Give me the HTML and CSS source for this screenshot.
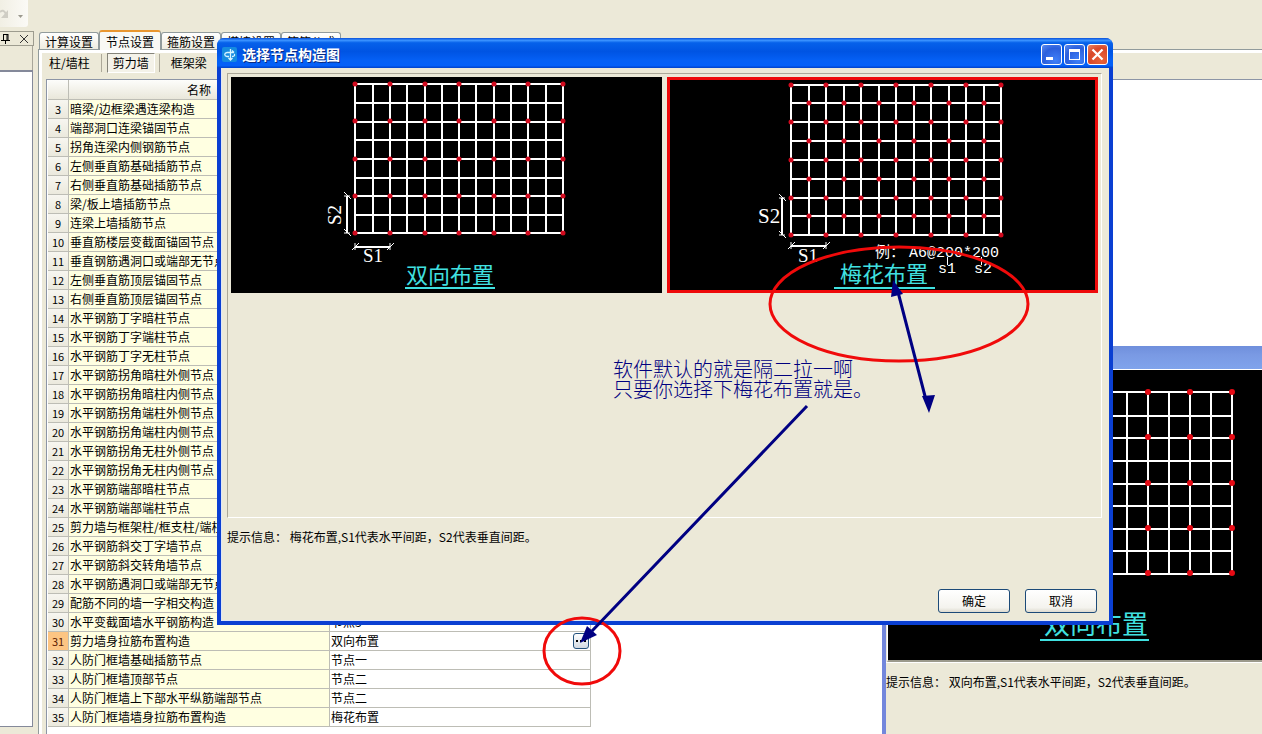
FILE: index.html
```html
<!DOCTYPE html>
<html lang="zh-CN">
<head>
<meta charset="utf-8">
<title>节点设置</title>
<link rel="stylesheet" href="styles.css">
</head>
<body>
<div class="app">
  <header class="toolbar">
    <button class="redo" aria-label="重做">
      <svg width="28" height="27" viewBox="0 0 28 27"><path d="M0 12c2-2 4-2 6 2" fill="none" stroke="#cfcdc4" stroke-width="2"/><path d="M8 10v8H1z" fill="#cfcdc4"/><path d="M18 15h5l-2.500 3z" fill="#9b998e"/></svg>
    </button>
  </header>
  <div class="workspace">
    <aside class="dock">
      <div class="dock-head">
        <button class="dock-btn" aria-label="固定"><svg width="10" height="10" viewBox="0 0 10 10"><path d="M2 .5h5M2.500 0v6M6 0v6M7 0v6M0 6.500h9M4.500 6v4" stroke="#000" fill="none"/></svg></button>
        <button class="dock-btn" aria-label="关闭"><svg width="8" height="8" viewBox="0 0 8 8"><path d="M0 0l8 8M8 0l-8 8" stroke="#333" fill="none"/></svg></button>
      </div>
      <div class="dock-bar"></div>
      <div class="dock-body"></div>
    </aside>
    <main class="content">
      <nav class="tabs">
        <button class="tab">计算设置</button>
        <button class="tab active">节点设置</button>
        <button class="tab">箍筋设置</button>
        <button class="tab">搭接设置</button>
        <button class="tab">箍筋公式</button>
      </nav>
      <section class="panel">
        <div class="subtabs">
          <button class="sub">柱/墙柱</button>
          <button class="sub pressed">剪力墙</button>
          <button class="sub">框架梁</button>
        </div>
        <div class="sheet">
          <table class="grid">
            <colgroup><col class="c-num"><col class="c-name"><col class="c-val"></colgroup>
            <thead><tr><th></th><th>名称</th><th>节点图</th></tr></thead>
            <tbody>
              <tr><th>3</th><td>暗梁/边框梁遇连梁构造</td><td></td></tr>
              <tr><th>4</th><td>端部洞口连梁锚固节点</td><td></td></tr>
              <tr><th>5</th><td>拐角连梁内侧钢筋节点</td><td></td></tr>
              <tr><th>6</th><td>左侧垂直筋基础插筋节点</td><td></td></tr>
              <tr><th>7</th><td>右侧垂直筋基础插筋节点</td><td></td></tr>
              <tr><th>8</th><td>梁/板上墙插筋节点</td><td></td></tr>
              <tr><th>9</th><td>连梁上墙插筋节点</td><td></td></tr>
              <tr><th>10</th><td>垂直筋楼层变截面锚固节点</td><td></td></tr>
              <tr><th>11</th><td>垂直钢筋遇洞口或端部无节点</td><td></td></tr>
              <tr><th>12</th><td>左侧垂直筋顶层锚固节点</td><td></td></tr>
              <tr><th>13</th><td>右侧垂直筋顶层锚固节点</td><td></td></tr>
              <tr><th>14</th><td>水平钢筋丁字暗柱节点</td><td></td></tr>
              <tr><th>15</th><td>水平钢筋丁字端柱节点</td><td></td></tr>
              <tr><th>16</th><td>水平钢筋丁字无柱节点</td><td></td></tr>
              <tr><th>17</th><td>水平钢筋拐角暗柱外侧节点</td><td></td></tr>
              <tr><th>18</th><td>水平钢筋拐角暗柱内侧节点</td><td></td></tr>
              <tr><th>19</th><td>水平钢筋拐角端柱外侧节点</td><td></td></tr>
              <tr><th>20</th><td>水平钢筋拐角端柱内侧节点</td><td></td></tr>
              <tr><th>21</th><td>水平钢筋拐角无柱外侧节点</td><td></td></tr>
              <tr><th>22</th><td>水平钢筋拐角无柱内侧节点</td><td></td></tr>
              <tr><th>23</th><td>水平钢筋端部暗柱节点</td><td></td></tr>
              <tr><th>24</th><td>水平钢筋端部端柱节点</td><td></td></tr>
              <tr><th>25</th><td>剪力墙与框架柱/框支柱/端柱</td><td></td></tr>
              <tr><th>26</th><td>水平钢筋斜交丁字墙节点</td><td></td></tr>
              <tr><th>27</th><td>水平钢筋斜交转角墙节点</td><td></td></tr>
              <tr><th>28</th><td>水平钢筋遇洞口或端部无节点</td><td></td></tr>
              <tr><th>29</th><td>配筋不同的墙一字相交构造</td><td></td></tr>
              <tr><th>30</th><td>水平变截面墙水平钢筋构造</td><td>节点3</td></tr>
              <tr class="current"><th>31</th><td>剪力墙身拉筋布置构造</td><td><div class="picker"><span>双向布置</span><button class="more" aria-label="选择"><svg width="10" height="3" viewBox="0 0 10 3"><path d="M0 0h2v2H0zM4 0h2v2H4zM8 0h2v2H8z"/></svg></button></div></td></tr>
              <tr><th>32</th><td>人防门框墙基础插筋节点</td><td>节点一</td></tr>
              <tr><th>33</th><td>人防门框墙顶部节点</td><td>节点二</td></tr>
              <tr><th>34</th><td>人防门框墙上下部水平纵筋端部节点</td><td>节点二</td></tr>
              <tr><th>35</th><td>人防门框墙墙身拉筋布置构造</td><td>梅花布置</td></tr>
            </tbody>
          </table>
        </div>
      </section>
    </main>
  </div>

  <section class="preview">
    <div class="preview-title"></div>
    <div class="preview-pic">
      <svg width="374" height="290" viewBox="0 0 374 290">
        <g stroke="#fff" stroke-width="2" fill="none">
          <path d="M92 22H345M92 46H345M92 68H345M92 91H345M92 114H345M92 136H345M92 159H345M92 181H345M92 204H345"/>
          <path d="M92 22V204M113 22V204M134 22V204M155 22V204M176 22V204M197 22V204M218 22V204M239 22V204M260 22V204M281 22V204M302 22V204M323 22V204M344 22V204"/>
        </g>
        <g stroke="#e60a14" stroke-width="6" stroke-linecap="round">
          <path id="pr" d="M92 22h0M134 22h0M176 22h0M218 22h0M260 22h0M302 22h0M344 22h0"/>
          <use href="#pr" y="45"/><use href="#pr" y="91"/><use href="#pr" y="136"/><use href="#pr" y="181"/>
        </g>
        <text class="cap big" x="156" y="264">双向布置</text>
        <path d="M152 270H261" stroke="#40e0e0" stroke-width="2"/>
      </svg>
    </div>
    <p class="hint">提示信息： 双向布置,S1代表水平间距，S2代表垂直间距。</p>
  </section>

  <section class="dialog" role="dialog" aria-labelledby="dlg-title">
    <div class="titlebar">
      <svg class="logo" width="15" height="15" viewBox="0 0 15 15"><rect width="15" height="15" rx="2" fill="#168be0"/><path d="M5 5.500H12M10 3.500l2 2M8.500 2v11M6.500 11l2 2 2-2M5 5.500C2 6 2 9 5 9.500h2M10 9.500c3 0 3-2 2-2.500" fill="none" stroke="#d9f4ff" stroke-width="1.300"/></svg>
      <h1 id="dlg-title">选择节点构造图</h1>
      <div class="winbtns">
        <button class="wb" aria-label="最小化"><svg width="19" height="19" viewBox="0 0 19 19"><path d="M4 12h7v3H4z" fill="#fff"/></svg></button>
        <button class="wb" aria-label="最大化"><svg width="19" height="19" viewBox="0 0 19 19"><path d="M4 4h11v11H4zM5 7v7h9V7z" fill="#fff" fill-rule="evenodd"/></svg></button>
        <button class="wb close" aria-label="关闭"><svg width="19" height="19" viewBox="0 0 19 19"><path d="M4.500 4.500l10 10M14.500 4.500l-10 10" stroke="#fff" stroke-width="2.200"/></svg></button>
      </div>
    </div>
    <div class="dialog-body">
      <div class="choices">
        <button class="choice" aria-label="双向布置">
          <svg viewBox="0 0 431 216">
            <g stroke="#fff" stroke-width="2" fill="none">
              <path d="M124 7H333M124 26H333M124 45H333M124 63H333M124 82H333M124 101H333M124 119H333M124 138H333M124 156H333"/>
              <path d="M124 7V156M142 7V156M159 7V156M176 7V156M194 7V156M211 7V156M228 7V156M245 7V156M263 7V156M280 7V156M297 7V156M315 7V156M332 7V156"/>
              <path d="M116 119V156M124 170H159"/>
              <path d="M113 115l7 7M113 152l7 7M113 119h6M113 156h6M121 173l7-7M156 173l7-7M124 166v7M159 166v7" stroke-width="1"/>
            </g>
            <g stroke="#d20a1e" stroke-width="5" stroke-linecap="round">
              <path id="ar" d="M124 7h0M159 7h0M194 7h0M228 7h0M263 7h0M297 7h0M332 7h0"/>
              <use href="#ar" y="37"/><use href="#ar" y="75"/><use href="#ar" y="112"/><use href="#ar" y="149"/>
            </g>
            <text class="dim" x="132" y="185">S1</text>
            <text class="dim" transform="translate(110 148) rotate(-90)">S2</text>
            <text class="cap" x="175" y="206">双向布置</text>
            <path d="M174 211H264" stroke="#40e0e0" stroke-width="2"/>
          </svg>
        </button>
        <button class="choice selected" aria-label="梅花布置">
          <svg viewBox="0 0 431 216">
            <g stroke="#fff" stroke-width="2" fill="none">
              <path d="M124 8H335M124 26H335M124 45H335M124 64H335M124 83H335M124 102H335M124 121H335M124 139H335M124 158H335"/>
              <path d="M124 8V158M142 8V158M159 8V158M177 8V158M194 8V158M212 8V158M229 8V158M247 8V158M264 8V158M282 8V158M299 8V158M317 8V158M334 8V158"/>
              <path d="M115 121V158M124 169H159"/>
              <path d="M112 117l7 7M112 154l7 7M112 121h6M112 158h6M121 172l7-7M156 172l7-7M124 165v7M159 165v7M280.500 180v8M314.500 180v8" stroke-width="1"/>
            </g>
            <g stroke="#d20a1e" stroke-width="5" stroke-linecap="round">
              <path id="br" d="M124 8h0M159 8h0M194 8h0M229 8h0M264 8h0M299 8h0M334 8h0"/>
              <use href="#br" y="37"/><use href="#br" y="75"/><use href="#br" y="113"/><use href="#br" y="150"/>
              <path id="bs" d="M142 26h0M177 26h0M212 26h0M247 26h0M282 26h0M317 26h0"/>
              <use href="#bs" y="38"/><use href="#bs" y="76"/><use href="#bs" y="113"/>
            </g>
            <text class="dim" x="131" y="185">S1</text>
            <text class="dim large" x="91" y="146">S2</text>
            <text class="ex" x="208" y="180">例：</text>
            <text class="ex" x="242" y="180">A6@200*200</text>
            <text class="ex" x="271" y="196">s1</text>
            <text class="ex" x="307" y="196">s2</text>
            <text class="cap" x="173" y="205">梅花布置</text>
            <path d="M167 211H268" stroke="#40e0e0" stroke-width="2"/>
          </svg>
        </button>
      </div>
      <p class="hint">提示信息： 梅花布置,S1代表水平间距，S2代表垂直间距。</p>
      <div class="actions">
        <button class="btn">确定</button>
        <button class="btn">取消</button>
      </div>
    </div>
  </section>

  <svg class="marks" width="1262" height="734" viewBox="0 0 1262 734">
    <g fill="none" stroke="#f00a0a" stroke-width="3">
      <ellipse cx="899" cy="304" rx="129" ry="57"/>
      <ellipse cx="582" cy="651" rx="38" ry="33"/>
    </g>
    <g stroke="#000082" stroke-width="3" fill="none"><path d="M898 292L926 400M807 406L592 631"/></g>
    <g fill="#000082"><path d="M893 280l-2 17 12-3zM929 413l-7-17 13-1zM580 643l7-17 10 9z"/></g>
    <g class="note"><text x="613" y="377">软件默认的就是隔二拉一啊</text><text x="613" y="397">只要你选择下梅花布置就是。</text></g>
  </svg>
</div>
</body>
</html>
```
FILE: styles.css
```css
* { box-sizing: border-box; }
body {
  margin: 0;
  background: #ece9d8;
  color: #000;
  font: 12px/16px "Noto Sans CJK SC", sans-serif;
}
button { font: inherit; color: inherit; padding: 0; margin: 0; border: 0; background: none; }
svg { display: block; }
h1, p { margin: 0; }

.app {
  position: relative;
  height: 100vh;
  overflow: hidden;
  display: flex;
  flex-direction: column;
}
.toolbar { height: 30px; flex: none; }
.redo { display: block; background: linear-gradient(90deg, #f1efe4, #fbfaf6); border-radius: 0 0 3px 0; }

.workspace { flex: 1; display: flex; min-height: 0; }
.dock { width: 34px; flex: none; display: flex; flex-direction: column; padding: 1px 0 7px; }
.dock-head {
  height: 15px;
  display: flex;
  align-items: center;
  justify-content: flex-end;
  gap: 9px;
  padding-right: 5px;
  border: 1px solid #9d9c8f;
  border-left: 0;
}
.dock-bar { height: 24px; margin-right: 1px; border-right: 1px solid #a8a69a; }
.dock-body { flex: 1; margin-right: 1px; background: #fff; border: solid #84899a; border-width: 2px 1px 1px 0; }

.content { flex: 1; min-width: 0; display: flex; flex-direction: column; padding-left: 4px; }
.tabs { display: flex; align-items: flex-end; height: 19px; padding-left: 1px; flex: none; }
.tab {
  width: 60px;
  height: 17px;
  flex: none;
  background: linear-gradient(#fff, #eeece0);
  border: 1px solid #919b9c;
  border-bottom: 0;
  border-radius: 3px 3px 0 0;
  white-space: nowrap;
  line-height: 17px;
}
.tab.active { width: 62px; height: 20px; margin-bottom: -1px; background: #f8f8f4; border-top: 2px solid #e9962f; z-index: 1; }

.panel {
  flex: 1;
  min-height: 0;
  display: flex;
  flex-direction: column;
  border: solid #919b9c;
  border-width: 1px 0 0 1px;
  box-shadow: inset 3px 3px #fff;
  padding-left: 7px;
}
.subtabs { display: flex; align-items: center; height: 29px; flex: none; padding: 0 0 3px 3px; }
.sub { height: 20px; line-height: 18px; margin-right: 17px; }
.sub.pressed {
  padding: 0 5px;
  margin-right: 16px;
  border: 1px solid;
  border-color: #85847a #fff #fff #85847a;
  background: #f4f2e9;
  position: relative;
}
.sub.pressed::before, .sub.pressed::after { content: ""; position: absolute; top: 0; bottom: 0; width: 1px; background: #aca899; }
.sub.pressed::before { left: -7px; }
.sub.pressed::after { right: -6px; }

.sheet { flex: 1; min-height: 0; overflow: hidden; background: #fff; border: solid #8c95a6; border-width: 1px 0 0 1px; padding-left: 1px; }
.grid { table-layout: fixed; width: 543px; border-spacing: 0; }
.c-num { width: 21px; }
.c-name, .c-val { width: 261px; }
.grid th, .grid td {
  height: 19px;
  padding: 0 0 0 1px;
  border: solid #bdbdb5;
  border-width: 0 1px 1px 0;
  line-height: 18px;
  white-space: nowrap;
  overflow: hidden;
  text-align: left;
}
.grid th { font-weight: 400; text-align: center; padding: 0; background: linear-gradient(#f7f6f0, #ebe9dd); }
.grid tbody th { font-size: 11px; }
.grid thead th { height: 20px; background: linear-gradient(#fdfdfb, #e9e7da); }
.grid td:nth-child(2) { background: #ffffe1; }
.grid .current th { background: #fdc583; color: #5b1a00; }
.picker { display: flex; justify-content: space-between; align-items: center; height: 18px; padding-right: 1px; }
.more {
  width: 16px;
  height: 16px;
  display: flex;
  align-items: center;
  justify-content: center;
  border: 1px solid #24527d;
  border-radius: 3px;
  background: linear-gradient(#fff, #d3dae2);
}

.preview {
  position: absolute;
  left: 882px;
  right: 0;
  top: 346px;
  bottom: 0;
  background: #ece9d8;
  border-left: 4px solid #7387dc;
}
.preview-title { height: 23px; margin-left: -4px; background: linear-gradient(#6f8fdc, #7a9ae4 40%, #7fa3ec); }
.preview-pic { height: 293px; margin-left: 1px; overflow: hidden; background: #000; border: solid #fff; border-width: 1px 0 0 1px; border-bottom: 2px solid #9c9a8c; }
.preview .hint { padding: 11px 0 0; border-top: 1px solid #fff; }
.hint { white-space: nowrap; }

.cap { font: 22px "Noto Sans CJK SC", sans-serif; fill: #40e0e0; }
.cap.big { font-size: 26px; }
.dim { font: 19px "Liberation Serif", serif; fill: #fff; }
.dim.large { font-size: 21px; }
.ex { font: 15px "Liberation Mono", "Noto Sans CJK SC", monospace; fill: #fff; }

.dialog {
  position: absolute;
  left: 217px;
  right: 149px;
  top: 38px;
  bottom: 109px;
  display: flex;
  flex-direction: column;
  background: #ece9d8;
  border: solid #0a3fd2;
  border-width: 0 4px 4px;
  border-radius: 8px 8px 0 0;
  box-shadow: inset 0 -1px #dfe6f5, inset 1px 0 #dfe6f5;
}
.titlebar {
  height: 30px;
  flex: none;
  display: flex;
  align-items: center;
  gap: 5px;
  margin: 0 -4px;
  padding: 2px 5px 0;
  border-radius: 7px 7px 0 0;
  background: linear-gradient(#0a50d8, #3a92ff 8%, #0661ea 16%, #0054e3 45%, #0560f5 75%, #0460f8 92%, #0140c8);
}
.titlebar h1 { flex: 1; font-size: 14px; line-height: 20px; font-weight: 700; color: #fff; text-shadow: 1px 1px #0a2a80; }
.winbtns { display: flex; gap: 2px; }
.wb {
  width: 21px;
  height: 21px;
  border: 1px solid #fff;
  border-radius: 3px;
  background: radial-gradient(circle at 70% 80%, #3f80f8, #2b5fdc 60%, #5b8cf0);
}
.wb.close { background: radial-gradient(circle at 70% 80%, #e8633a, #d8482a 60%, #e88868); }

.dialog-body { flex: 1; display: flex; flex-direction: column; padding: 5px 7px 8px 6px; min-height: 0; }
.choices {
  flex: 1;
  min-height: 0;
  display: flex;
  align-items: flex-start;
  gap: 5px;
  padding: 3px;
  border: 1px solid;
  border-color: #aca899 #fff #fff #aca899;
}
.choice { position: relative; flex: 1; min-width: 0; background: #000; }
.choice svg { width: 100%; }
.choice.selected::after { content: ""; position: absolute; inset: 0; border: 3px solid #ee0a0a; }
.dialog .hint { height: 71px; padding-top: 11px; }
.actions { display: flex; justify-content: flex-end; gap: 15px; padding-right: 5px; }
.btn {
  width: 72px;
  height: 24px;
  border: 1px solid #1c4a78;
  border-radius: 3px;
  background: linear-gradient(#fff, #f4f3ee 80%, #dedbd0);
}

.marks { position: absolute; left: 0; top: 0; pointer-events: none; }
.note { font: 20px "Noto Sans CJK SC", sans-serif; font-weight: 300; fill: #00007f; }
```
